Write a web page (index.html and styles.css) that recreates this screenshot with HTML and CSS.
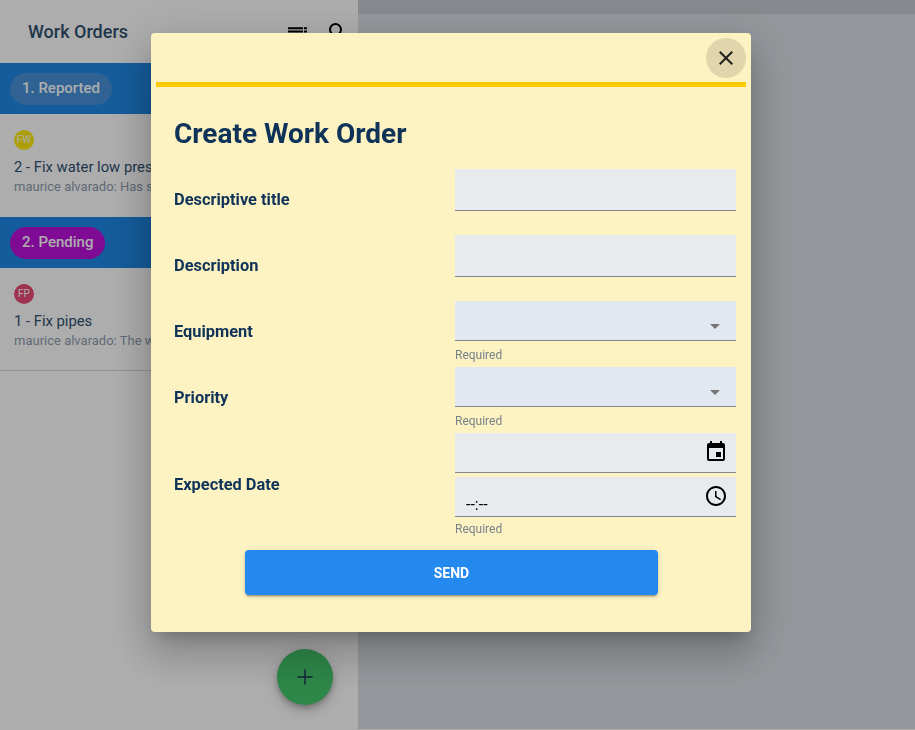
FILE: index.html
```html
<!DOCTYPE html>
<html lang="en">

<head>
    <meta charset="UTF-8">
    <meta name="viewport" content="width=device-width, initial-scale=1.0">
    <title>Work Orders</title>
    <link rel="stylesheet" href="styles.css">
</head>

<body>

    <div class="app">
        <!-- Left list of work orders -->
        <aside class="sidebar">
            <div class="side-header">
                <div class="side-title">Work Orders</div>
                <svg class="side-icon" viewBox="0 0 24 24"><path d="M2 7.300h15v2H2zM2 10.500h15v2H2zM2 13.700h11v2H2zM18 7.300h3v2h-3zM18 10.500h3v2h-3z"/></svg>
                <svg class="side-icon" viewBox="0 0 24 24"><path d="M15.500 14h-.79l-.28-.27A6.470 6.470 0 0 0 16 9.500 6.500 6.500 0 1 0 9.500 16c1.610 0 3.090-.59 4.230-1.570l.27.28v.79l5 4.990L20.490 19l-4.990-5zm-6 0C7.010 14 5 11.990 5 9.500S7.010 5 9.500 5 14 7.010 14 9.500 11.990 14 9.500 14z"/></svg>
            </div>

            <div class="group-header">
                <span class="pill pill-reported">1. Reported</span>
            </div>
            <div class="order">
                <div class="avatar avatar-yellow">FW</div>
                <div class="order-title">2 - Fix water low pressure</div>
                <div class="order-sub">maurice alvarado: Has some</div>
            </div>

            <div class="group-header">
                <span class="pill pill-pending">2. Pending</span>
            </div>
            <div class="order order-last">
                <div class="avatar avatar-red">FP</div>
                <div class="order-title">1 - Fix pipes</div>
                <div class="order-sub">maurice alvarado: The water</div>
            </div>

            <button class="fab">
                <svg viewBox="0 0 24 24"><path d="M12 4.500v15M4.500 12h15"/></svg>
            </button>
        </aside>

        <main class="content">
            <div class="content-bar"></div>
        </main>
    </div>

    <div class="backdrop">
        <div class="modal">
            <div class="modal-top">
                <button class="close-btn">
                    <svg viewBox="0 0 24 24"><path d="M19 6.410 17.590 5 12 10.590 6.410 5 5 6.410 10.590 12 5 17.590 6.410 19 12 13.410 17.590 19 19 17.590 13.410 12z"/></svg>
                </button>
            </div>
            <div class="modal-line"></div>

            <h1 class="modal-title">Create Work Order</h1>

            <div class="form-row">
                <div class="form-label">Descriptive title</div>
                <div class="form-fields">
                    <div class="field field-tall"></div>
                </div>
            </div>

            <div class="form-row">
                <div class="form-label">Description</div>
                <div class="form-fields">
                    <div class="field field-tall"></div>
                </div>
            </div>

            <div class="form-row">
                <div class="form-label">Equipment</div>
                <div class="form-fields">
                    <div class="field field-select"><span class="arrow"></span></div>
                    <div class="hint">Required</div>
                </div>
            </div>

            <div class="form-row">
                <div class="form-label">Priority</div>
                <div class="form-fields">
                    <div class="field field-select"><span class="arrow"></span></div>
                    <div class="hint">Required</div>
                </div>
            </div>

            <div class="form-row form-row-date">
                <div class="form-label">Expected Date</div>
                <div class="form-fields">
                    <div class="field">
                        <svg class="field-icon" viewBox="0 0 24 24"><path d="M17 12h-5v5h5v-5zM16 1v2H8V1H6v2H5c-1.110 0-1.990.9-1.990 2L3 19c0 1.100.89 2 2 2h14c1.100 0 2-.9 2-2V5c0-1.100-.9-2-2-2h-1V1h-2zm3 18H5V8h14v11z"/></svg>
                    </div>
                    <div class="field field-time">
                        <span class="time-text">--:--</span>
                        <svg class="field-icon" viewBox="0 0 24 24"><path d="M11.990 2C6.470 2 2 6.480 2 12s4.470 10 9.990 10C17.520 22 22 17.520 22 12S17.520 2 11.990 2zM12 20c-4.420 0-8-3.580-8-8s3.580-8 8-8 8 3.580 8 8-3.580 8-8 8z"/><path d="M12.500 7H11v6l5.250 3.150.75-1.230-4.500-2.670z"/></svg>
                    </div>
                    <div class="hint hint-date">Required</div>
                </div>
            </div>

            <button class="send-btn">SEND</button>
        </div>
    </div>

</body>

</html>
```

FILE: styles.css
```css
/* Base page */

html,
body {
    margin: 0;
    padding: 0;
    height: 100%;
    overflow: hidden;
}

body {
    font-family: Roboto, "Liberation Sans", sans-serif;
    background-color: #fff;
    color: #30506f;
}

.app {
    display: flex;
    height: 729px;
}

/* Left column */

.sidebar {
    position: relative;
    width: 358px;
    flex-shrink: 0;
    background-color: #fff;
    overflow: hidden;
}

.side-header {
    display: flex;
    align-items: center;
    height: 63px;
    padding: 0 8px 0 28px;
    box-sizing: border-box;
}

.side-title {
    flex: 1;
    font-size: 18px;
    font-weight: 500;
    color: #30506f;
}

.side-icon {
    width: 24px;
    height: 24px;
    margin-left: 16px;
    fill: #000;
}

.group-header {
    display: flex;
    align-items: center;
    height: 51px;
    padding-left: 10px;
    background-color: #1e88e5;
    box-sizing: border-box;
}

.pill {
    display: block;
    height: 32px;
    line-height: 31px;
    padding: 0 12px;
    border-radius: 16px;
    font-size: 15px;
    font-weight: 500;
    color: #fff;
}

.pill-reported {
    background-color: #4791db;
}

.pill-pending {
    background-color: #bc0fdb;
}

.order {
    height: 103px;
    padding: 16px 14px 0;
    box-sizing: border-box;
    white-space: nowrap;
    overflow: hidden;
}

.order-last {
    border-bottom: 1px solid #d8d8d8;
}

.avatar {
    width: 20px;
    height: 20px;
    line-height: 20px;
    border-radius: 50%;
    text-align: center;
    font-size: 10px;
    color: #fff;
}

.avatar-yellow {
    background-color: #ffeb0f;
}

.avatar-red {
    background-color: #eb4a78;
}

.order-title {
    margin-top: 8px;
    font-size: 14.800px;
    line-height: 18px;
    color: #30506f;
}

.order-sub {
    margin-top: 3px;
    font-size: 13px;
    line-height: 16px;
    color: #8e9cb0;
}

.fab {
    position: absolute;
    left: 277px;
    top: 649px;
    width: 56px;
    height: 56px;
    padding: 16px;
    border: none;
    border-radius: 50%;
    background-color: #43c76a;
    box-shadow: 0 3px 5px -1px rgba(0, 0, 0, .2), 0 6px 10px rgba(0, 0, 0, .14), 0 1px 18px rgba(0, 0, 0, .12);
}

.fab svg {
    display: block;
    width: 24px;
    height: 24px;
    fill: none;
    stroke: #1d3557;
    stroke-width: 1.500;
}

/* Right side */

.content {
    flex: 1;
    background-color: #dbdfe5;
}

.content-bar {
    height: 14px;
    background-color: #c6cbd2;
}

/* Dialog */

.backdrop {
    position: fixed;
    top: 0;
    left: 0;
    right: 0;
    bottom: 0;
    padding: 33px 164px 0 151px;
    background-color: rgba(0, 0, 0, .32);
}

.modal {
    width: 600px;
    height: 599px;
    padding: 5px;
    box-sizing: border-box;
    border-radius: 4px;
    background-color: #fdf2c2;
    box-shadow: 0 11px 15px -7px rgba(0, 0, 0, .2), 0 24px 38px 3px rgba(0, 0, 0, .14), 0 9px 46px 8px rgba(0, 0, 0, .12);
}

.modal-top {
    display: flex;
    justify-content: flex-end;
    height: 44px;
}

.close-btn {
    width: 40px;
    height: 40px;
    padding: 8px;
    border: none;
    border-radius: 50%;
    background-color: #e1d5ab;
}

.close-btn svg {
    display: block;
    width: 24px;
    height: 24px;
    fill: #212121;
}

.modal-line {
    height: 5px;
    background-color: #ffcc00;
}

.modal-title {
    margin: 29px 0 14px 18px;
    font-size: 28px;
    line-height: 36px;
    font-weight: 700;
    color: #0f3358;
}

.form-row {
    display: flex;
    align-items: center;
    height: 66px;
    padding: 0 10px 0 18px;
}

.form-row-date {
    height: 108px;
}

.form-label {
    width: 281px;
    flex-shrink: 0;
    font-size: 16.400px;
    font-weight: 700;
    color: #0f3358;
}

.form-fields {
    flex: 1;
    align-self: flex-start;
    padding-top: 3px;
}

.field {
    position: relative;
    height: 40px;
    background-color: #e8ebee;
    border-bottom: 1px solid #84878e;
    box-sizing: border-box;
}

.field-tall {
    height: 42px;
}

.field-select {
    background-color: #e2e8ef;
}

.field-time {
    margin-top: 4px;
}

.arrow {
    position: absolute;
    right: 16px;
    top: 23px;
    border-left: 5px solid transparent;
    border-right: 5px solid transparent;
    border-top: 5px solid #757575;
}

.field-icon {
    position: absolute;
    right: 8px;
    top: 7px;
    width: 24px;
    height: 24px;
    fill: #000;
}

.time-text {
    position: absolute;
    left: 11px;
    bottom: 1px;
    font-size: 16px;
    line-height: 20px;
    color: #000;
}

.hint {
    margin-top: 8px;
    font-size: 12px;
    line-height: 12px;
    color: #78838a;
}

.hint-date {
    margin-top: 6px;
}

.send-btn {
    display: block;
    width: 413px;
    height: 45px;
    margin: 12px 0 0 89px;
    border: none;
    border-radius: 4px;
    background-color: #2389ee;
    color: #fff;
    font-family: Roboto, "Liberation Sans", sans-serif;
    font-size: 14px;
    font-weight: 700;
    box-shadow: 0 3px 1px -2px rgba(0, 0, 0, .2), 0 2px 2px rgba(0, 0, 0, .14), 0 1px 5px rgba(0, 0, 0, .12);
}
```
